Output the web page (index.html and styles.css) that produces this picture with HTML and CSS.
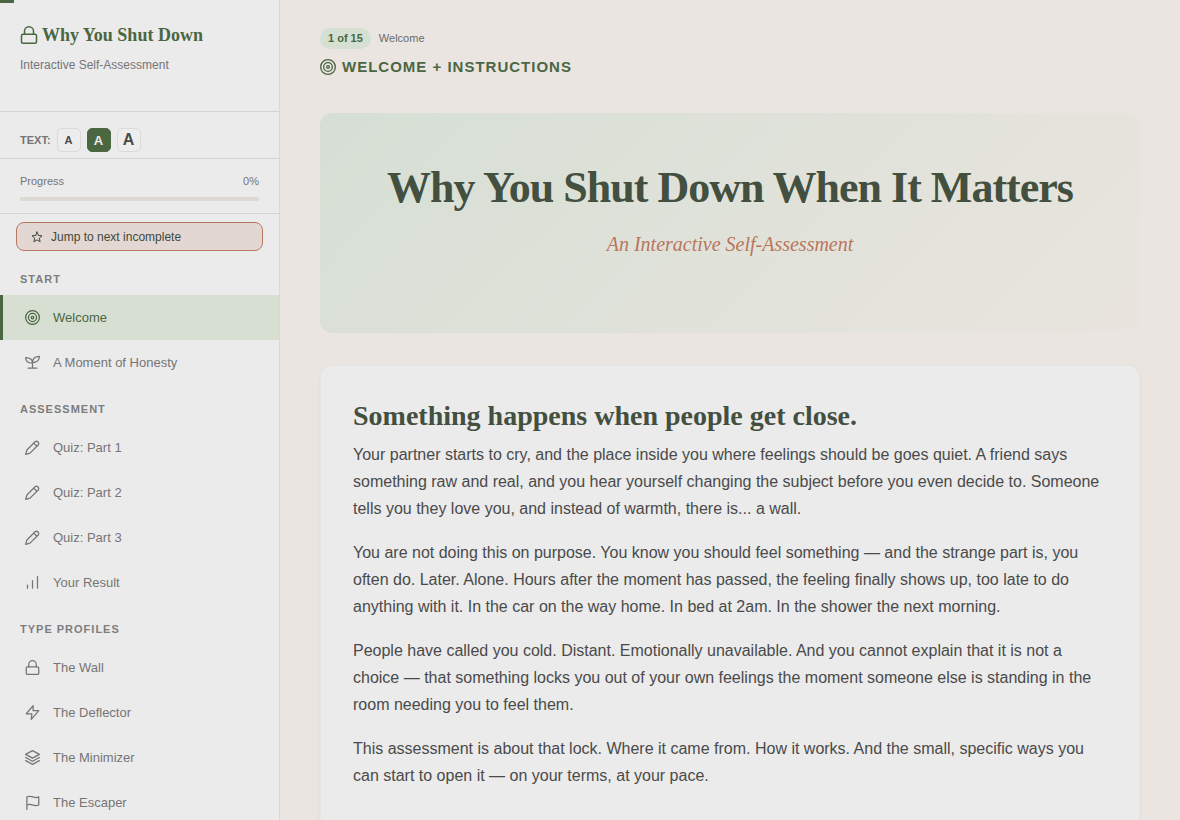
FILE: index.html
```
<!DOCTYPE html>
<html lang="en">
<head>
    <meta charset="UTF-8">
    <meta name="viewport" content="width=device-width, initial-scale=1.0">
    <title>Why You Shut Down When It Matters</title>
    <link rel="stylesheet" href="styles.css">
</head>
<body>
<svg class="sprite" aria-hidden="true">
    <symbol id="i-lock" viewBox="0 0 24 24"><rect x="2" y="11" width="20" height="12" rx="2"/><path d="M6 11V7a6 6 0 0 1 12 0v4"/></symbol>
    <symbol id="i-target" viewBox="0 0 24 24"><circle cx="12" cy="12" r="11"/><circle cx="12" cy="12" r="6.500"/><circle cx="12" cy="12" r="2"/></symbol>
    <symbol id="i-sprout" viewBox="0 0 24 24"><path d="M5 21h14M12 21v-9M12 13C12 7 8 4 1 4c0 6 4 9 11 9zM12 12c0-6 4-10 11-10 0 7-4 10-11 10z"/></symbol>
    <symbol id="i-pencil" viewBox="0 0 24 24"><path d="M16.500 2.500a3.700 3.700 0 0 1 5 5L8 21l-7 2 2-7zM14 5l5 5"/></symbol>
    <symbol id="i-bars" viewBox="0 0 24 24"><path d="M20 21V2M12 21V9M4 21v-5"/></symbol>
    <symbol id="i-bolt" viewBox="0 0 24 24"><path d="M13 1L2 14h9l-1 9 12-14h-9z"/></symbol>
    <symbol id="i-layers" viewBox="0 0 24 24"><path d="M12 1L1 7l11 6 11-6zM1 12l11 6 11-6M1 17l11 6 11-6"/></symbol>
    <symbol id="i-flag" viewBox="0 0 24 24"><path d="M3 23V3s1-1 5-1 6 2 9 2 5-1 5-1v13s-1 1-5 1-6-2-9-2-5 1-5 1"/></symbol>
    <symbol id="i-star" viewBox="0 0 24 24"><path d="M12 2l3 7 7 .6-5.300 4.700 1.600 7.200L12 17.700 5.700 21.500l1.600-7.200L2 9.600 9 9z"/></symbol>
</svg>

<div class="page-progress"></div>

<div class="layout">
    <aside class="sidebar">
        <div class="brand">
            <div class="brand-title"><svg class="icon"><use href="#i-lock"/></svg>Why You Shut Down</div>
            <p>Interactive Self-Assessment</p>
        </div>

        <div class="text-size">
            <span class="text-label">Text:</span>
            <button type="button" class="size-btn size-small" aria-label="Small text">A</button>
            <button type="button" class="size-btn size-medium active" aria-label="Medium text">A</button>
            <button type="button" class="size-btn size-large" aria-label="Large text">A</button>
        </div>

        <div class="progress">
            <div class="progress-row"><span>Progress</span><span>0%</span></div>
            <div class="progress-track"></div>
        </div>

        <button type="button" class="jump-btn"><svg class="icon"><use href="#i-star"/></svg>Jump to next incomplete</button>

        <nav>
            <h2 class="nav-label">Start</h2>
            <a href="#welcome" class="nav-item active"><svg class="icon"><use href="#i-target"/></svg>Welcome</a>
            <a href="#honesty" class="nav-item"><svg class="icon"><use href="#i-sprout"/></svg>A Moment of Honesty</a>

            <h2 class="nav-label">Assessment</h2>
            <a href="#quiz1" class="nav-item"><svg class="icon"><use href="#i-pencil"/></svg>Quiz: Part 1</a>
            <a href="#quiz2" class="nav-item"><svg class="icon"><use href="#i-pencil"/></svg>Quiz: Part 2</a>
            <a href="#quiz3" class="nav-item"><svg class="icon"><use href="#i-pencil"/></svg>Quiz: Part 3</a>
            <a href="#result" class="nav-item"><svg class="icon"><use href="#i-bars"/></svg>Your Result</a>

            <h2 class="nav-label">Type Profiles</h2>
            <a href="#wall" class="nav-item"><svg class="icon"><use href="#i-lock"/></svg>The Wall</a>
            <a href="#deflector" class="nav-item"><svg class="icon"><use href="#i-bolt"/></svg>The Deflector</a>
            <a href="#minimizer" class="nav-item"><svg class="icon"><use href="#i-layers"/></svg>The Minimizer</a>
            <a href="#escaper" class="nav-item"><svg class="icon"><use href="#i-flag"/></svg>The Escaper</a>
        </nav>
    </aside>

    <main class="main" id="welcome">
        <div class="crumbs"><span class="badge">1 of 15</span><span>Welcome</span></div>
        <div class="section-title"><svg class="icon"><use href="#i-target"/></svg>Welcome + Instructions</div>

        <header class="hero">
            <h1>Why You Shut Down When It Matters</h1>
            <p>An Interactive Self-Assessment</p>
        </header>

        <section class="card">
            <h2>Something happens when people get close.</h2>
            <p>Your partner starts to cry, and the place inside you where feelings should be goes quiet. A friend says something raw and real, and you hear yourself changing the subject before you even decide to. Someone tells you they love you, and instead of warmth, there is... a wall.</p>
            <p>You are not doing this on purpose. You know you should feel something — and the strange part is, you often do. Later. Alone. Hours after the moment has passed, the feeling finally shows up, too late to do anything with it. In the car on the way home. In bed at 2am. In the shower the next morning.</p>
            <p>People have called you cold. Distant. Emotionally unavailable. And you cannot explain that it is not a choice — that something locks you out of your own feelings the moment someone else is standing in the room needing you to feel them.</p>
            <p>This assessment is about that lock. Where it came from. How it works. And the small, specific ways you can start to open it — on your terms, at your pace.</p>
        </section>
    </main>
</div>
</body>
</html>
```
FILE: styles.css
```
* {
    box-sizing: border-box;
}

body {
    margin: 0;
    font-family: "Liberation Sans", Arial, sans-serif;
    font-size: 16px;
    color: #4a4a4a;
    background: #eae5e1;
}

h1, h2, p {
    margin: 0;
}

button {
    font-family: inherit;
    cursor: pointer;
}

.sprite {
    display: none;
}

.icon {
    width: 16px;
    height: 16px;
    flex-shrink: 0;
    fill: none;
    stroke: currentColor;
    stroke-width: 2;
    stroke-linecap: round;
    stroke-linejoin: round;
}

.page-progress {
    position: fixed;
    top: 0;
    left: 0;
    z-index: 10;
    width: 14px;
    height: 3px;
    background: #4a6741;
}

.layout {
    display: flex;
    height: 100vh;
}

/* Sidebar */
.sidebar {
    width: 280px;
    flex-shrink: 0;
    overflow: hidden;
    background: #ebebeb;
    border-right: 1px solid #dad8d5;
}

.brand {
    height: 112px;
    padding: 24px 20px;
    border-bottom: 1px solid #d4d3d1;
}

.brand-title {
    display: flex;
    align-items: center;
    gap: 4px;
    font-family: "Liberation Serif", "Times New Roman", serif;
    font-size: 18px;
    line-height: 22px;
    font-weight: bold;
    color: #4a6741;
}

.brand-title .icon {
    width: 18px;
    height: 18px;
}

.brand p {
    margin-top: 10px;
    font-size: 12px;
    line-height: 18px;
    color: #757575;
}

.text-size {
    display: flex;
    align-items: center;
    gap: 6px;
    padding: 16px 20px 6px;
    border-bottom: 1px solid #d4d3d1;
}

.text-label {
    font-size: 11px;
    font-weight: bold;
    text-transform: uppercase;
    color: #757575;
}

.size-btn {
    width: 24px;
    height: 24px;
    padding: 0;
    border: 1px solid #dcdad7;
    border-radius: 5px;
    font-weight: bold;
    color: #4a4a4a;
    background: #ededed;
}

.size-small {
    font-size: 11px;
}

.size-medium {
    font-size: 13px;
}

.size-large {
    font-size: 16px;
}

.size-btn.active {
    color: #ebebeb;
    background: #4a6741;
    border-color: #4a6741;
}

.progress {
    padding: 14px 20px 12px;
    border-bottom: 1px solid #d4d3d1;
}

.progress-row {
    display: flex;
    justify-content: space-between;
    font-size: 11px;
    line-height: 16px;
    color: #757575;
}

.progress-track {
    height: 4px;
    margin-top: 8px;
    border-radius: 2px;
    background: #dcd9d3;
}

.jump-btn {
    display: flex;
    align-items: center;
    gap: 8px;
    width: 247px;
    height: 29px;
    margin: 8px 16px 0;
    padding: 0 14px;
    border: 1px solid #b97762;
    border-radius: 8px;
    font-size: 12px;
    color: #3d4a3a;
    background: #e3d7d3;
}

.jump-btn .icon {
    width: 12px;
    height: 12px;
}

nav {
    padding-top: 4px;
}

.nav-label {
    padding: 18px 20px 9px;
    font-size: 11px;
    line-height: 13px;
    font-weight: bold;
    letter-spacing: 1px;
    text-transform: uppercase;
    color: #7d7d7d;
}

.nav-item {
    display: flex;
    align-items: center;
    gap: 13px;
    height: 45px;
    padding: 0 22px;
    border-left: 3px solid transparent;
    font-size: 13px;
    color: #757575;
    text-decoration: none;
}

.nav-item .icon {
    width: 15px;
    height: 15px;
}

.nav-item.active {
    color: #4a6741;
    background: #d7dfd3;
    border-left-color: #4a6741;
}

/* Main column */
.main {
    flex: 1;
    overflow: hidden;
    padding: 28px 40px;
}

.crumbs {
    display: flex;
    gap: 8px;
    font-size: 11px;
    line-height: 21px;
    color: #6b6b6b;
}

.badge {
    padding: 0 8px;
    border-radius: 11px;
    font-weight: bold;
    color: #4a6741;
    background: #d5e0d3;
}

.section-title {
    display: flex;
    align-items: center;
    gap: 6px;
    margin-top: 8px;
    font-size: 15px;
    line-height: 20px;
    font-weight: bold;
    letter-spacing: 1px;
    text-transform: uppercase;
    color: #4a6741;
}

.hero {
    height: 220px;
    margin-top: 36px;
    padding: 48px 32px;
    border-radius: 12px;
    text-align: center;
    background: linear-gradient(135deg, #d6dfd5, #e9e5de);
}

.hero h1 {
    font-family: "Liberation Serif", "Times New Roman", serif;
    font-size: 44px;
    line-height: 54px;
    letter-spacing: -1px;
    color: #434f3f;
}

.hero p {
    margin-top: 16px;
    font-family: "Liberation Serif", "Times New Roman", serif;
    font-size: 20px;
    line-height: 26px;
    font-style: italic;
    color: #b9755d;
}

.card {
    margin-top: 32px;
    padding: 32px;
    border: 1px solid #e8e6e3;
    border-radius: 12px;
    background: #ebebeb;
    box-shadow: 0 1px 4px rgba(0, 0, 0, 0.04);
}

.card h2 {
    margin-bottom: 8px;
    font-family: "Liberation Serif", "Times New Roman", serif;
    font-size: 28px;
    line-height: 35px;
    color: #434f3f;
}

.card p {
    margin-bottom: 17px;
    line-height: 27px;
}
```
